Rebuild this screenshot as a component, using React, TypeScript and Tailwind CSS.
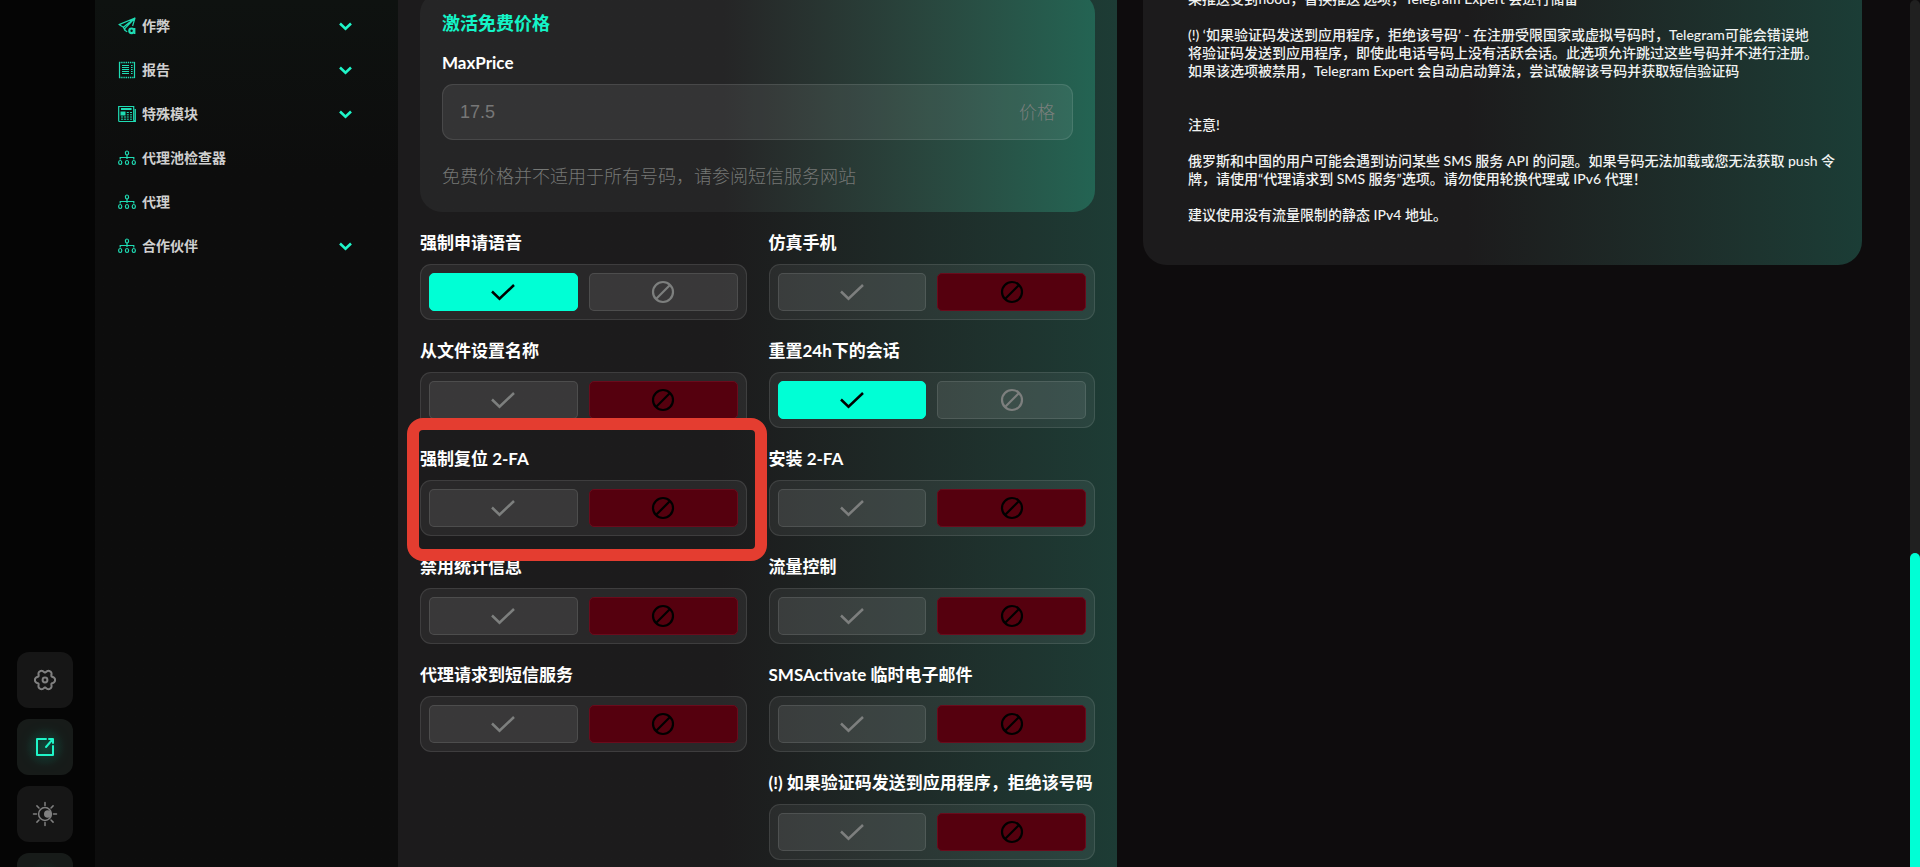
import type { ReactNode } from "react";

const settings = [
  { id: "voice", label: "强制申请语音", on: true },
  { id: "emulate", label: "仿真手机", on: false },
  { id: "names", label: "从文件设置名称", on: false },
  { id: "reset24", label: "重置24h下的会话", on: true },
  { id: "reset2fa", label: "强制复位 2-FA", on: false, highlighted: true },
  { id: "set2fa", label: "安装 2-FA", on: false },
  { id: "nostats", label: "禁用统计信息", on: false },
  { id: "traffic", label: "流量控制", on: false },
  { id: "proxysms", label: "代理请求到短信服务", on: false },
  { id: "tempmail", label: "SMSActivate 临时电子邮件", on: false },
  { id: "refuse", label: "(!) 如果验证码发送到应用程序，拒绝该号码", on: false, rightColumn: true },
];

function PlaneIcon() {
  return (
    <svg width="18" height="18" viewBox="0 0 18 18" fill="none" stroke="currentColor" strokeWidth="1.2" strokeLinejoin="round">
      <path d="M17 1 1 7.6l4.400 2.600L17 1ZM17 1 7 11.400l-.2 1.800 2.400 1.600M17 1l-2.400 8M5.400 10.200l1.400 3" />
      <circle cx="13.600" cy="13.800" r="2.300" strokeWidth="2.200" />
      <path d="M16.600 11v6" strokeWidth="1.600" />
    </svg>
  );
}

function ReportIcon() {
  return (
    <svg width="18" height="18" viewBox="0 0 18 18" fill="none" stroke="currentColor" strokeWidth="1">
      <path d="M1.500 1v16M16.500 1v16" strokeWidth="1.200" />
      <path d="M1 1.500h16M1 16.500h16" strokeWidth="1.600" strokeDasharray="1.400 .8" />
      <path d="M4 4.500h7M13 4.500h1.600M4 6.500h7M13 6.500h1.600M4 8.500h7M13 8.500h1.600M4 10.500h7M13 10.500h1.600M4 12.500h7M13 12.500h1.600" />
    </svg>
  );
}

function ModuleIcon() {
  return (
    <svg width="18" height="18" viewBox="0 0 18 18" fill="none" stroke="currentColor" strokeWidth="1">
      <path d="M.7 1.500h15v13.800l1.600 1.200H1.500a.8.8 0 0 1-.8-.8V1.500ZM17.300 4v12.500" strokeWidth="1.200" />
      <path d="M3 4h10.600" strokeWidth="2" />
      <rect x="3" y="7" width="4" height="3" fill="currentColor" />
      <path d="M8.800 7.500h2M12 7.500h2M8.800 9.800h2M12 9.800h2M3 12h2.200M6 12h2M8.800 12h2M12 12h2M3 14.200h2.200M6 14.200h2M8.800 14.200h2M12 14.200h2" />
    </svg>
  );
}

function NetworkIcon() {
  return (
    <svg width="18" height="16" viewBox="0 0 18 16" fill="none" stroke="currentColor" strokeWidth="1.200">
      <ellipse cx="9" cy="3" rx="1.600" ry="2" />
      <path d="M9 5v4M2.200 9.500V7.500h13.600v2" />
      <ellipse cx="2.200" cy="12.500" rx="1.600" ry="2" />
      <ellipse cx="9" cy="12.500" rx="1.600" ry="2" />
      <ellipse cx="15.800" cy="12.500" rx="1.600" ry="2" />
    </svg>
  );
}

const menu: { label: string; icon: ReactNode; expandable?: boolean }[] = [
  { label: "作弊", icon: <PlaneIcon />, expandable: true },
  { label: "报告", icon: <ReportIcon />, expandable: true },
  { label: "特殊模块", icon: <ModuleIcon />, expandable: true },
  { label: "代理池检查器", icon: <NetworkIcon /> },
  { label: "代理", icon: <NetworkIcon /> },
  { label: "合作伙伴", icon: <NetworkIcon />, expandable: true },
];

function GearIcon() {
  const points = Array.from({ length: 120 }, (_, i) => {
    const a = (i / 120) * Math.PI * 2;
    const r = 9 + 1.3 * Math.cos(6 * a) - 0.25 * Math.cos(12 * a);
    return `${(12 + r * Math.cos(a)).toFixed(2)},${(12 + r * Math.sin(a)).toFixed(2)}`;
  }).join(" ");
  return (
    <svg width="24" height="24" viewBox="0 0 24 24" fill="none" stroke="currentColor" strokeWidth="2">
      <polygon points={points} strokeLinejoin="round" />
      <circle cx="12" cy="12" r="2.400" />
    </svg>
  );
}

function ExternalIcon() {
  return (
    <svg width="24" height="24" viewBox="0 0 24 24" fill="none" stroke="currentColor" strokeWidth="2" strokeLinejoin="round" strokeLinecap="round" className="drop-shadow-[0_0_8px_#00ffd166]">
      <path d="M13 4H4v16h16v-9M13 12l6.500-7.500M16 4h4v4" />
    </svg>
  );
}

function ThemeIcon() {
  return (
    <svg width="26" height="26" viewBox="0 0 26 26" fill="none" stroke="currentColor" strokeWidth="1.500" strokeLinecap="round">
      <circle cx="13" cy="13" r="6.400" />
      <circle cx="15.800" cy="13" r="3.800" fill="currentColor" stroke="none" />
      <path d="M13 1.500v3M13 21.500v3M1.500 13h3M21.500 13h3M4.900 4.900 7 7M19 19l2.100 2.100M4.900 21.100 7 19M19 7l2.100-2.100" />
    </svg>
  );
}

function CheckIcon() {
  return (
    <svg width="24" height="18" viewBox="0 0 24 18" fill="none" stroke="currentColor" strokeWidth="2.500">
      <path d="m1 8.500 7.500 7.200L23 2" />
    </svg>
  );
}

function BanIcon() {
  return (
    <svg width="24" height="24" viewBox="0 0 24 24" fill="none" stroke="currentColor" strokeWidth="2.200">
      <circle cx="12" cy="12" r="10" />
      <path d="M5 19 19 5" />
    </svg>
  );
}

const optionBase = "flex h-[38px] flex-1 items-center justify-center rounded-[5px] border";
const optionIdle = "border-white/10 bg-white/8 text-[#7d7f7e]";

function Toggle({ id, label, on, highlighted, rightColumn }: (typeof settings)[number]) {
  return (
    <div className={rightColumn ? "relative min-w-0 col-start-2" : "relative min-w-0"}>
      <div id={id} className="mb-2 text-[17px] leading-[26px] font-bold whitespace-nowrap text-white">
        {label}
      </div>
      <div role="group" aria-labelledby={id} className="flex gap-[11px] rounded-[11px] border border-white/10 bg-white/6 p-2">
        <button type="button" aria-label="是" aria-pressed={on} className={`${optionBase} ${on ? "border-[#00ffd5] bg-[#00ffd5] text-black" : optionIdle}`}>
          <CheckIcon />
        </button>
        <button type="button" aria-label="否" aria-pressed={!on} className={`${optionBase} ${on ? optionIdle : "border-[#6a0b1c] bg-[#55000e] text-black"}`}>
          <BanIcon />
        </button>
      </div>
      {highlighted && (
        <div className="pointer-events-none absolute -top-7 -right-5 -bottom-[25px] -left-[13px] z-10 rounded-2xl border-12 border-[#e43d30]" />
      )}
    </div>
  );
}

function RailButton({ label, active, children }: { label: string; active?: boolean; children?: ReactNode }) {
  return (
    <button
      type="button"
      aria-label={label}
      className={`flex size-14 shrink-0 items-center justify-center rounded-xl ${
        active ? "bg-[radial-gradient(circle,#123329_0%,#171b19_50%)] text-[#1ff5c8]" : "bg-[#161616] text-[#808080]"
      }`}
    >
      {children}
    </button>
  );
}

export default function App() {
  return (
    <div className="flex h-screen overflow-hidden bg-[#0e0c0d] font-[Lato,'Noto_Sans_CJK_SC',sans-serif]">
      <aside className="-mb-[42px] flex w-[95px] shrink-0 flex-col justify-end gap-[11px] bg-[#050505] pl-[17px]">
        <RailButton label="设置"><GearIcon /></RailButton>
        <RailButton label="打开" active><ExternalIcon /></RailButton>
        <RailButton label="主题"><ThemeIcon /></RailButton>
        <RailButton label="更多" active />
      </aside>

      <nav className="w-[303px] shrink-0 bg-linear-to-b from-[#0e1210] to-[#0d0d0d] to-20% pt-1 pr-[46px] pl-[23px]">
        <ul>
          {menu.map((item) => (
            <li key={item.label}>
              <a href="#" className="flex h-11 items-center gap-[6px] text-sm font-bold text-[#cfcfcf]">
                <span className="flex w-[18px] justify-center text-[#1fdcb4]">{item.icon}</span>
                <span className="flex-1">{item.label}</span>
                {item.expandable && (
                  <svg width="13" height="9" viewBox="0 0 13 9" fill="none" stroke="#1ff5c8" strokeWidth="2.600">
                    <path d="m1 1.500 5.500 5.200L12 1.500" />
                  </svg>
                )}
              </a>
            </li>
          ))}
        </ul>
      </nav>

      <main className="grid min-w-0 flex-1 grid-cols-2 items-start gap-[26px] pr-12">
        <section className="min-h-screen min-w-0 bg-linear-to-r from-[#1c1b1c] from-45% to-[#1d3c35] px-[22px]">
          <div className="-mt-2 mb-[18px] rounded-[22px] bg-linear-to-r from-[#252526] from-45% to-[#236453] px-[22px] pt-[19px] pb-6">
            <h2 className="mb-4 text-lg leading-6 font-bold text-[#14f5c8]">激活免费价格</h2>
            <label htmlFor="max-price" className="mb-[9px] block text-[17px] leading-6 font-bold text-white">
              MaxPrice
            </label>
            <div className="mb-6 flex h-14 items-center rounded-[11px] border border-white/10 bg-white/7 px-[17px]">
              <input
                id="max-price"
                type="text"
                placeholder="17.5"
                className="min-w-0 flex-1 bg-transparent font-['Liberation_Sans',sans-serif] text-lg text-white outline-none placeholder:text-[#777777]"
              />
              <span className="text-lg font-light text-[#7b7f7d]">价格</span>
            </div>
            <p className="text-lg leading-6 font-light text-[#757775]">免费价格并不适用于所有号码，请参阅短信服务网站</p>
          </div>

          <div className="grid grid-cols-2 gap-x-[22px] gap-y-[18px]">
            {settings.map((setting) => (
              <Toggle key={setting.id} {...setting} />
            ))}
          </div>
        </section>

        <section className="-mt-[10px] min-w-0 rounded-b-3xl bg-linear-to-r from-[#1c1b1c] from-45% to-[#1b3d36] pr-4 pb-[41px] pl-[45px] text-sm leading-[18px] font-medium whitespace-nowrap text-[#f0f2f1]">
          <p className="mb-[18px]">果推送受到flood，替换推送'选项，Telegram Expert 会进行储备</p>
          <p className="mb-9">
            (!) ‘如果验证码发送到应用程序，拒绝该号码’ - 在注册受限国家或虚拟号码时，Telegram可能会错误地
            <br />
            将验证码发送到应用程序，即使此电话号码上没有活跃会话。此选项允许跳过这些号码并不进行注册。
            <br />
            如果该选项被禁用，Telegram Expert 会自动启动算法，尝试破解该号码并获取短信验证码
          </p>
          <p className="mb-[18px]">注意!</p>
          <p className="mb-[18px]">
            俄罗斯和中国的用户可能会遇到访问某些 SMS 服务 API 的问题。如果号码无法加载或您无法获取 push 令
            <br />
            牌，请使用“代理请求到 SMS 服务”选项。请勿使用轮换代理或 IPv6 代理！
          </p>
          <p>建议使用没有流量限制的静态 IPv4 地址。</p>
        </section>
      </main>

      <div className="flex w-[10px] shrink-0 flex-col justify-end rounded-t-full bg-[#202020]">
        <div className="h-[36.2%] rounded-t-full bg-[#00ffd5]" />
      </div>
    </div>
  );
}
